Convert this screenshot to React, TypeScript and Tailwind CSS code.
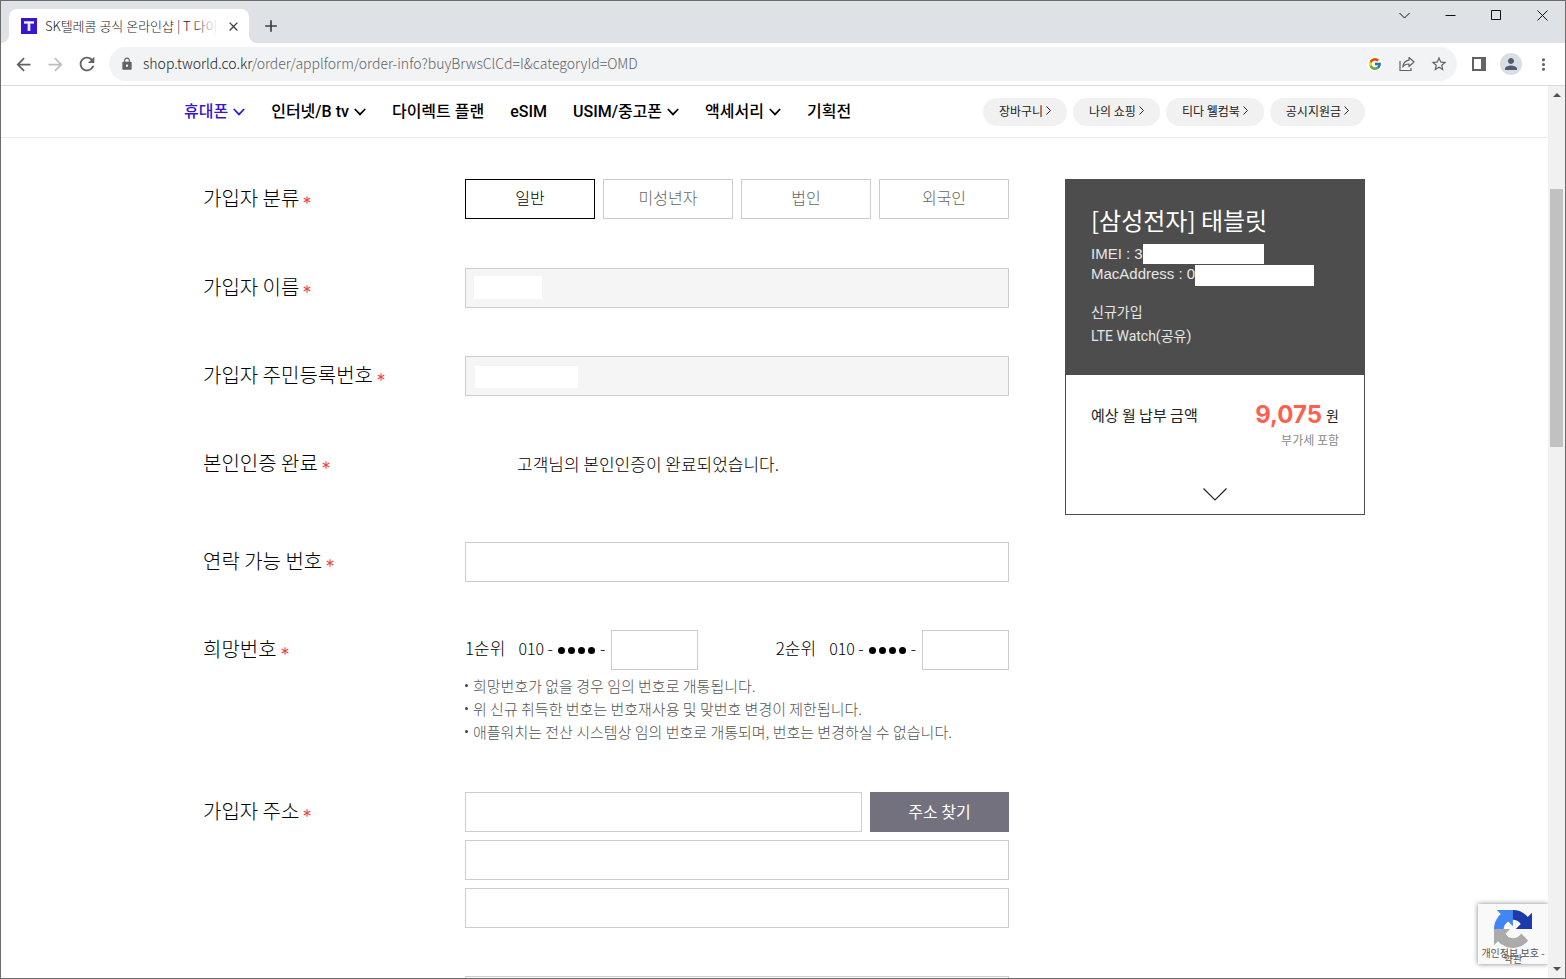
import React from 'react';
import {
  MdArrowBack,
  MdArrowForward,
  MdRefresh,
  MdLock,
  MdStarBorder,
  MdPerson,
  MdMoreVert,
  MdClose,
  MdAdd,
} from 'react-icons/md';
import { FcGoogle } from 'react-icons/fc';

const Chevron: React.FC = () => (
  <svg width="12" height="8" viewBox="0 0 12 8" fill="none" stroke="currentColor" strokeWidth="1.8">
    <path d="M0.8 1 L6 6.4 L11.2 1" />
  </svg>
);

const TabStrip: React.FC = () => (
  <div className="flex h-[42px] shrink-0 justify-between bg-[#dee1e6]">
    <div className="flex items-end">
      <svg width="8" height="8" viewBox="0 0 8 8"><path d="M8 0V8H0A8 8 0 0 0 8 0z" fill="#fff" /></svg>
      <div className="flex h-[34px] w-60 items-center rounded-t-lg bg-white pr-2 pl-3">
        <svg width="16" height="16" viewBox="0 0 16 16" className="shrink-0">
          <rect width="16" height="16" fill="#3617ce" />
          <path d="M3 3.2h10v2.6H9.4V13H6.6V5.8H3z" fill="#d9d3f7" />
          <path d="M3.4 4.4h9.2M8 4.4V12.6" stroke="#fff" strokeWidth="1.2" />
        </svg>
        <div className="relative ml-2 flex-1 overflow-hidden text-[13px] font-light whitespace-nowrap text-[#202124]">
          SK텔레콤 공식 온라인샵 | T 다이렉트샵
          <span className="absolute inset-y-0 right-0 w-6 bg-linear-to-r from-transparent to-white" />
        </div>
        <button aria-label="탭 닫기" className="ml-1.5 flex w-4 justify-center">
          <MdClose size={15} className="text-[#3c4043]" />
        </button>
      </div>
      <svg width="8" height="8" viewBox="0 0 8 8"><path d="M0 0V8H8A8 8 0 0 1 0 0z" fill="#fff" /></svg>
      <button aria-label="새 탭" className="flex h-[34px] w-7 items-center justify-center">
        <MdAdd size={20} className="text-[#3c4043]" />
      </button>
    </div>
    <div className="flex">
      {[
        { name: '탭 검색', d: 'M0.5 3 L5.5 8 L10.5 3' },
        { name: '최소화', d: 'M0.5 5.5 H10.5' },
        { name: '최대화', d: 'M0.5 0.5 H9.5 V9.5 H0.5 Z' },
        { name: '닫기', d: 'M0.5 0.5 L10.5 10.5 M10.5 0.5 L0.5 10.5' },
      ].map((control) => (
        <button key={control.name} aria-label={control.name} className="flex h-7 w-[46px] items-center justify-center">
          <svg width="11" height="11" viewBox="0 0 11 11" fill="none" stroke="#111">
            <path d={control.d} />
          </svg>
        </button>
      ))}
    </div>
  </div>
);

const iconButton = 'flex h-8 w-8 shrink-0 items-center justify-center';

const Toolbar: React.FC = () => (
  <div className="flex h-[43px] shrink-0 items-center border-b border-[#d8dadd] bg-white px-1.5 text-[#5f6368]">
    <button aria-label="뒤로" className={iconButton}><MdArrowBack size={21} /></button>
    <button aria-label="앞으로" className={iconButton}><MdArrowForward size={21} className="text-[#bbbdbf]" /></button>
    <button aria-label="새로고침" className={iconButton}><MdRefresh size={22} /></button>
    <div className="mx-1.5 flex h-[34px] flex-1 items-center rounded-full bg-[#f1f3f4] pr-0.5 pl-[11px]">
      <MdLock size={14} className="shrink-0" />
      <div className="ml-[9px] flex-1 pb-0.5 text-sm font-light whitespace-nowrap">
        <span className="text-[#202124]">shop.tworld.co.kr</span>
        /order/applform/order-info?buyBrwsClCd=I&amp;categoryId=OMD
      </div>
      <button aria-label="Google" className={iconButton}>
        <span className="rounded-full bg-white p-px"><FcGoogle size={14} /></span>
      </button>
      <button aria-label="공유" className={iconButton}>
        <svg width="16" height="16" viewBox="0 0 16 16" fill="none" stroke="currentColor" strokeWidth="1.2">
          <path d="M1 5v9.5h11V12" />
          <path d="M10 1.5 L15 6 L10 10.5 V8 C7 8 5 9 3.8 11 C4.2 7.5 6.3 4.7 10 4.2 Z" strokeLinejoin="round" />
        </svg>
      </button>
      <button aria-label="북마크" className={iconButton}><MdStarBorder size={18} /></button>
    </div>
    <button aria-label="사이드 패널" className={iconButton}>
      <svg width="14" height="14" viewBox="0 0 14 14">
        <path d="M1 1h12v12H1z" fill="none" stroke="currentColor" strokeWidth="2" />
        <path d="M9 1h4v12H9z" fill="currentColor" />
      </svg>
    </button>
    <button aria-label="프로필" className={iconButton}>
      <span className="flex h-[22px] w-[22px] items-center justify-center rounded-full bg-[#dadde3]">
        <MdPerson size={18} className="text-[#525c70]" />
      </span>
    </button>
    <button aria-label="메뉴" className={iconButton}><MdMoreVert size={19} /></button>
  </div>
);

const menus = [
  { name: '휴대폰', sub: true, active: true },
  { name: '인터넷/B tv', sub: true },
  { name: '다이렉트 플랜' },
  { name: 'eSIM' },
  { name: 'USIM/중고폰', sub: true },
  { name: '액세서리', sub: true },
  { name: '기획전' },
];

const SiteHeader: React.FC = () => (
  <header className="border-b border-[#ebebeb]">
    <div className="mx-auto flex h-[51px] max-w-[1181px] items-center justify-between">
      <nav className="flex gap-[26px] font-['Roboto','Noto_Sans_CJK_KR',sans-serif] text-base font-medium">
        {menus.map((menu) => (
          <a
            key={menu.name}
            href="#"
            className={`flex items-center gap-[5px] whitespace-nowrap ${menu.active ? 'text-[#3617ce]' : 'text-black'}`}
          >
            {menu.name}
            {menu.sub && <Chevron />}
          </a>
        ))}
      </nav>
      <div className="flex gap-1.5 text-xs text-[#222]">
        {['장바구니', '나의 쇼핑', '티다 웰컴북', '공시지원금'].map((name) => (
          <a key={name} href="#" className="flex h-7 items-center gap-[3px] rounded-full bg-[#f1f1f1] px-4 pb-0.5 whitespace-nowrap">
            {name}
            <svg width="5" height="9" viewBox="0 0 5 9" fill="none" stroke="currentColor">
              <path d="M0.5 0.5 L4.5 4.5 L0.5 8.5" />
            </svg>
          </a>
        ))}
      </div>
    </div>
  </header>
);

interface RowProps {
  label: string;
  htmlFor?: string;
  className?: string;
  children: React.ReactNode;
}

const Row: React.FC<RowProps> = ({ label, htmlFor, className = '', children }) => (
  <div className={`flex ${className}`}>
    <label htmlFor={htmlFor} className="flex h-10 w-[262px] shrink-0 items-center gap-1 pb-0.5 text-xl font-light text-black">
      {label}
      <svg width="8" height="8" viewBox="0 0 8 8" stroke="#f0443c" strokeWidth="1.1" className="mt-1">
        <path d="M4 0.2V7.8M0.7 2.1L7.3 5.9M7.3 2.1L0.7 5.9" />
      </svg>
    </label>
    <div className="min-w-0 flex-1">{children}</div>
  </div>
);

const inputStyle = 'block h-10 w-full border border-[#ccc] bg-white px-3 text-base';

const WishNumber: React.FC<{ id: string; label: string }> = ({ id, label }) => (
  <div className="flex items-center">
    <div className="flex items-center gap-[5px] pb-1">
      <label htmlFor={id} className="mr-2 text-[17px]">{label}</label>
      <span>010 -</span>
      <span className="flex gap-[3px] pt-1">
        {[0, 1, 2, 3].map((n) => (
          <span key={n} className="h-[7px] w-[7px] rounded-full bg-black" />
        ))}
      </span>
      <span className="mr-1.5">-</span>
    </div>
    <input id={id} maxLength={4} className="h-10 w-[87px] border border-[#ccc] bg-white px-3" />
  </div>
);

const OrderForm: React.FC = () => (
  <form className="flex flex-1 flex-col gap-12">
    <Row label="가입자 분류" className="pb-px">
      <div className="grid grid-cols-4 gap-2">
        {['일반', '미성년자', '법인', '외국인'].map((type, index) => (
          <button
            key={type}
            type="button"
            className={`h-10 border pb-1 text-base font-light ${
              index === 0 ? 'border-black text-black' : 'border-[#ccc] text-[#666]'
            }`}
          >
            {type}
          </button>
        ))}
      </div>
    </Row>
    <Row label="가입자 이름" htmlFor="name">
      <div className="relative">
        <input id="name" readOnly className="block h-10 w-full border border-[#ccc] bg-[#f5f5f5]" />
        <span className="absolute top-2 left-[9px] h-[23px] w-[68px] bg-white" />
      </div>
    </Row>
    <Row label="가입자 주민등록번호" htmlFor="rrn">
      <div className="relative">
        <input id="rrn" readOnly className="block h-10 w-full border border-[#ccc] bg-[#f5f5f5]" />
        <span className="absolute top-2.5 left-2.5 h-[22px] w-[103px] bg-white" />
      </div>
    </Row>
    <Row label="본인인증 완료" className="h-[50px]">
      <p className="flex h-10 items-center pl-[52px] text-[17px] font-light">고객님의 본인인증이 완료되었습니다.</p>
    </Row>
    <Row label="연락 가능 번호" htmlFor="contact">
      <input id="contact" className={inputStyle} />
    </Row>
    <Row label="희망번호" htmlFor="wish1">
      <div className="flex justify-between text-base font-light">
        <WishNumber id="wish1" label="1순위" />
        <WishNumber id="wish2" label="2순위" />
      </div>
      <ul className="mt-1 text-[15px] leading-[23px] font-light text-[#555]">
        {[
          '희망번호가 없을 경우 임의 번호로 개통됩니다.',
          '위 신규 취득한 번호는 번호재사용 및 맞번호 변경이 제한됩니다.',
          '애플워치는 전산 시스템상 임의 번호로 개통되며, 번호는 변경하실 수 없습니다.',
        ].map((note) => (
          <li key={note} className="flex items-center gap-[5px]">
            <span className="h-[3px] w-[3px] rounded-full bg-[#444]" />
            {note}
          </li>
        ))}
      </ul>
    </Row>
    <Row label="가입자 주소" htmlFor="zip" className="pt-px">
      <div className="flex flex-col gap-2">
        <div className="flex gap-2">
          <input id="zip" className={inputStyle} />
          <button type="button" className="h-10 w-[139px] shrink-0 bg-[#74717f] pb-0.5 text-base text-white">
            주소 찾기
          </button>
        </div>
        <input aria-label="주소" className={inputStyle} />
        <input aria-label="상세 주소" className={inputStyle} />
      </div>
    </Row>
    <div className="pl-[262px]">
      <input aria-label="이메일" className={inputStyle} />
    </div>
  </form>
);

const SummaryCard: React.FC = () => (
  <aside className="w-[300px] shrink-0 self-start border border-[#4d4d4d]">
    <div className="h-[195px] bg-[#4d4d4d] px-[25px] pt-6 text-[#e6e6e6]">
      <h2 className="text-2xl leading-8 text-white">[삼성전자] 태블릿</h2>
      <div className="mt-2 font-['Liberation_Sans'] text-[15px] leading-5">
        <p className="flex">IMEI : 3<span className="h-5 w-[121px] bg-white" /></p>
        <p className="flex">MacAddress : 0<span className="mt-px h-[21px] w-[119px] bg-white" /></p>
      </div>
      <div className="mt-3.5 font-['Roboto','Noto_Sans_CJK_KR',sans-serif] text-sm leading-6">
        <p>신규가입</p>
        <p>LTE Watch(공유)</p>
      </div>
    </div>
    <div className="h-[139px] bg-white px-[25px] pt-6">
      <div className="flex items-center justify-between text-[15px] text-[#222]">
        <span>예상 월 납부 금액</span>
        <span className="flex items-center gap-1 text-sm">
          <strong className="font-['Inter'] text-2xl leading-8 font-bold text-[#ff5f4f]">9,075</strong>
          원
        </span>
      </div>
      <p className="text-right text-xs leading-[18px] text-[#888]">부가세 포함</p>
      <button aria-label="상세 보기" className="mx-auto mt-[39px] block">
        <svg width="24" height="13" viewBox="0 0 24 13" fill="none" stroke="#222" strokeWidth="1.2">
          <path d="M0.5 0.5 L12 12 L23.5 0.5" />
        </svg>
      </button>
    </div>
  </aside>
);

const Recaptcha: React.FC = () => (
  <div className="absolute right-0 bottom-3.5 h-[60px] w-[70px] bg-[#f9f9f9] shadow-[0_0_5px_gray]">
    <svg width="38" height="38" viewBox="0 0 64 64" className="mt-1.5 ml-4">
      <path
        d="M64 31.955l-.033-1.37V4.687l-7.16 7.16C50.948 4.674 42.033.093 32.05.093c-10.4 0-19.622 4.96-25.458 12.64l11.736 11.86a15.55 15.55 0 0 1 4.754-5.334c2.05-1.6 4.952-2.906 8.968-2.906.485 0 .86.057 1.135.163 4.976.393 9.288 3.14 11.828 7.124l-8.307 8.307L64 31.953"
        fill="#1c3aa9"
      />
      <path
        d="M31.862.094l-1.37.033H4.594l7.16 7.16C4.58 13.147 0 22.06 0 32.046c0 10.4 4.96 19.622 12.64 25.458L24.5 45.768a15.55 15.55 0 0 1-5.334-4.754c-1.6-2.05-2.906-4.952-2.906-8.968 0-.485.057-.86.163-1.135.393-4.976 3.14-9.288 7.124-11.828l8.307 8.307L31.86.095"
        fill="#4285f4"
      />
      <path
        d="M.001 32.045l.033 1.37v25.898l7.16-7.16c5.86 7.173 14.774 11.754 24.76 11.754 10.4 0 19.622-4.96 25.458-12.64l-11.736-11.86a15.55 15.55 0 0 1-4.754 5.334c-2.05 1.6-4.952 2.906-8.968 2.906-.485 0-.86-.057-1.135-.163-4.976-.393-9.288-3.14-11.828-7.124l8.307-8.307c-10.522.04-22.4.066-27.295-.005"
        fill="#ababab"
      />
    </svg>
    <p className="pt-0.5 text-center text-[10px] leading-[6px] whitespace-nowrap text-[#555]">
      개인정보 보호 -<br />약관
    </p>
  </div>
);

const ScrollBar: React.FC = () => (
  <div className="flex w-[17px] shrink-0 flex-col items-center bg-[#f1f1f1] py-[7px]">
    <svg width="8" height="4" viewBox="0 0 8 4"><path d="M0 4 L4 0 L8 4z" fill="#505050" /></svg>
    <div className="mt-[92px] h-[258px] w-[13px] bg-[#c1c1c1]" />
    <svg width="8" height="4" viewBox="0 0 8 4" className="mt-auto"><path d="M0 0 L4 4 L8 0z" fill="#505050" /></svg>
  </div>
);

export default function App() {
  return (
    <div className="flex h-screen flex-col overflow-hidden border border-[#6b6b6b] bg-white font-['Noto_Sans_CJK_KR','Noto_Sans',sans-serif] text-black">
      <TabStrip />
      <Toolbar />
      <div className="flex min-h-0 flex-1">
        <div className="relative min-w-0 flex-1 overflow-hidden">
          <SiteHeader />
          <main className="mx-auto flex max-w-[1181px] gap-14 pt-[41px] pl-[19px]">
            <OrderForm />
            <SummaryCard />
          </main>
          <Recaptcha />
        </div>
        <ScrollBar />
      </div>
    </div>
  );
}
